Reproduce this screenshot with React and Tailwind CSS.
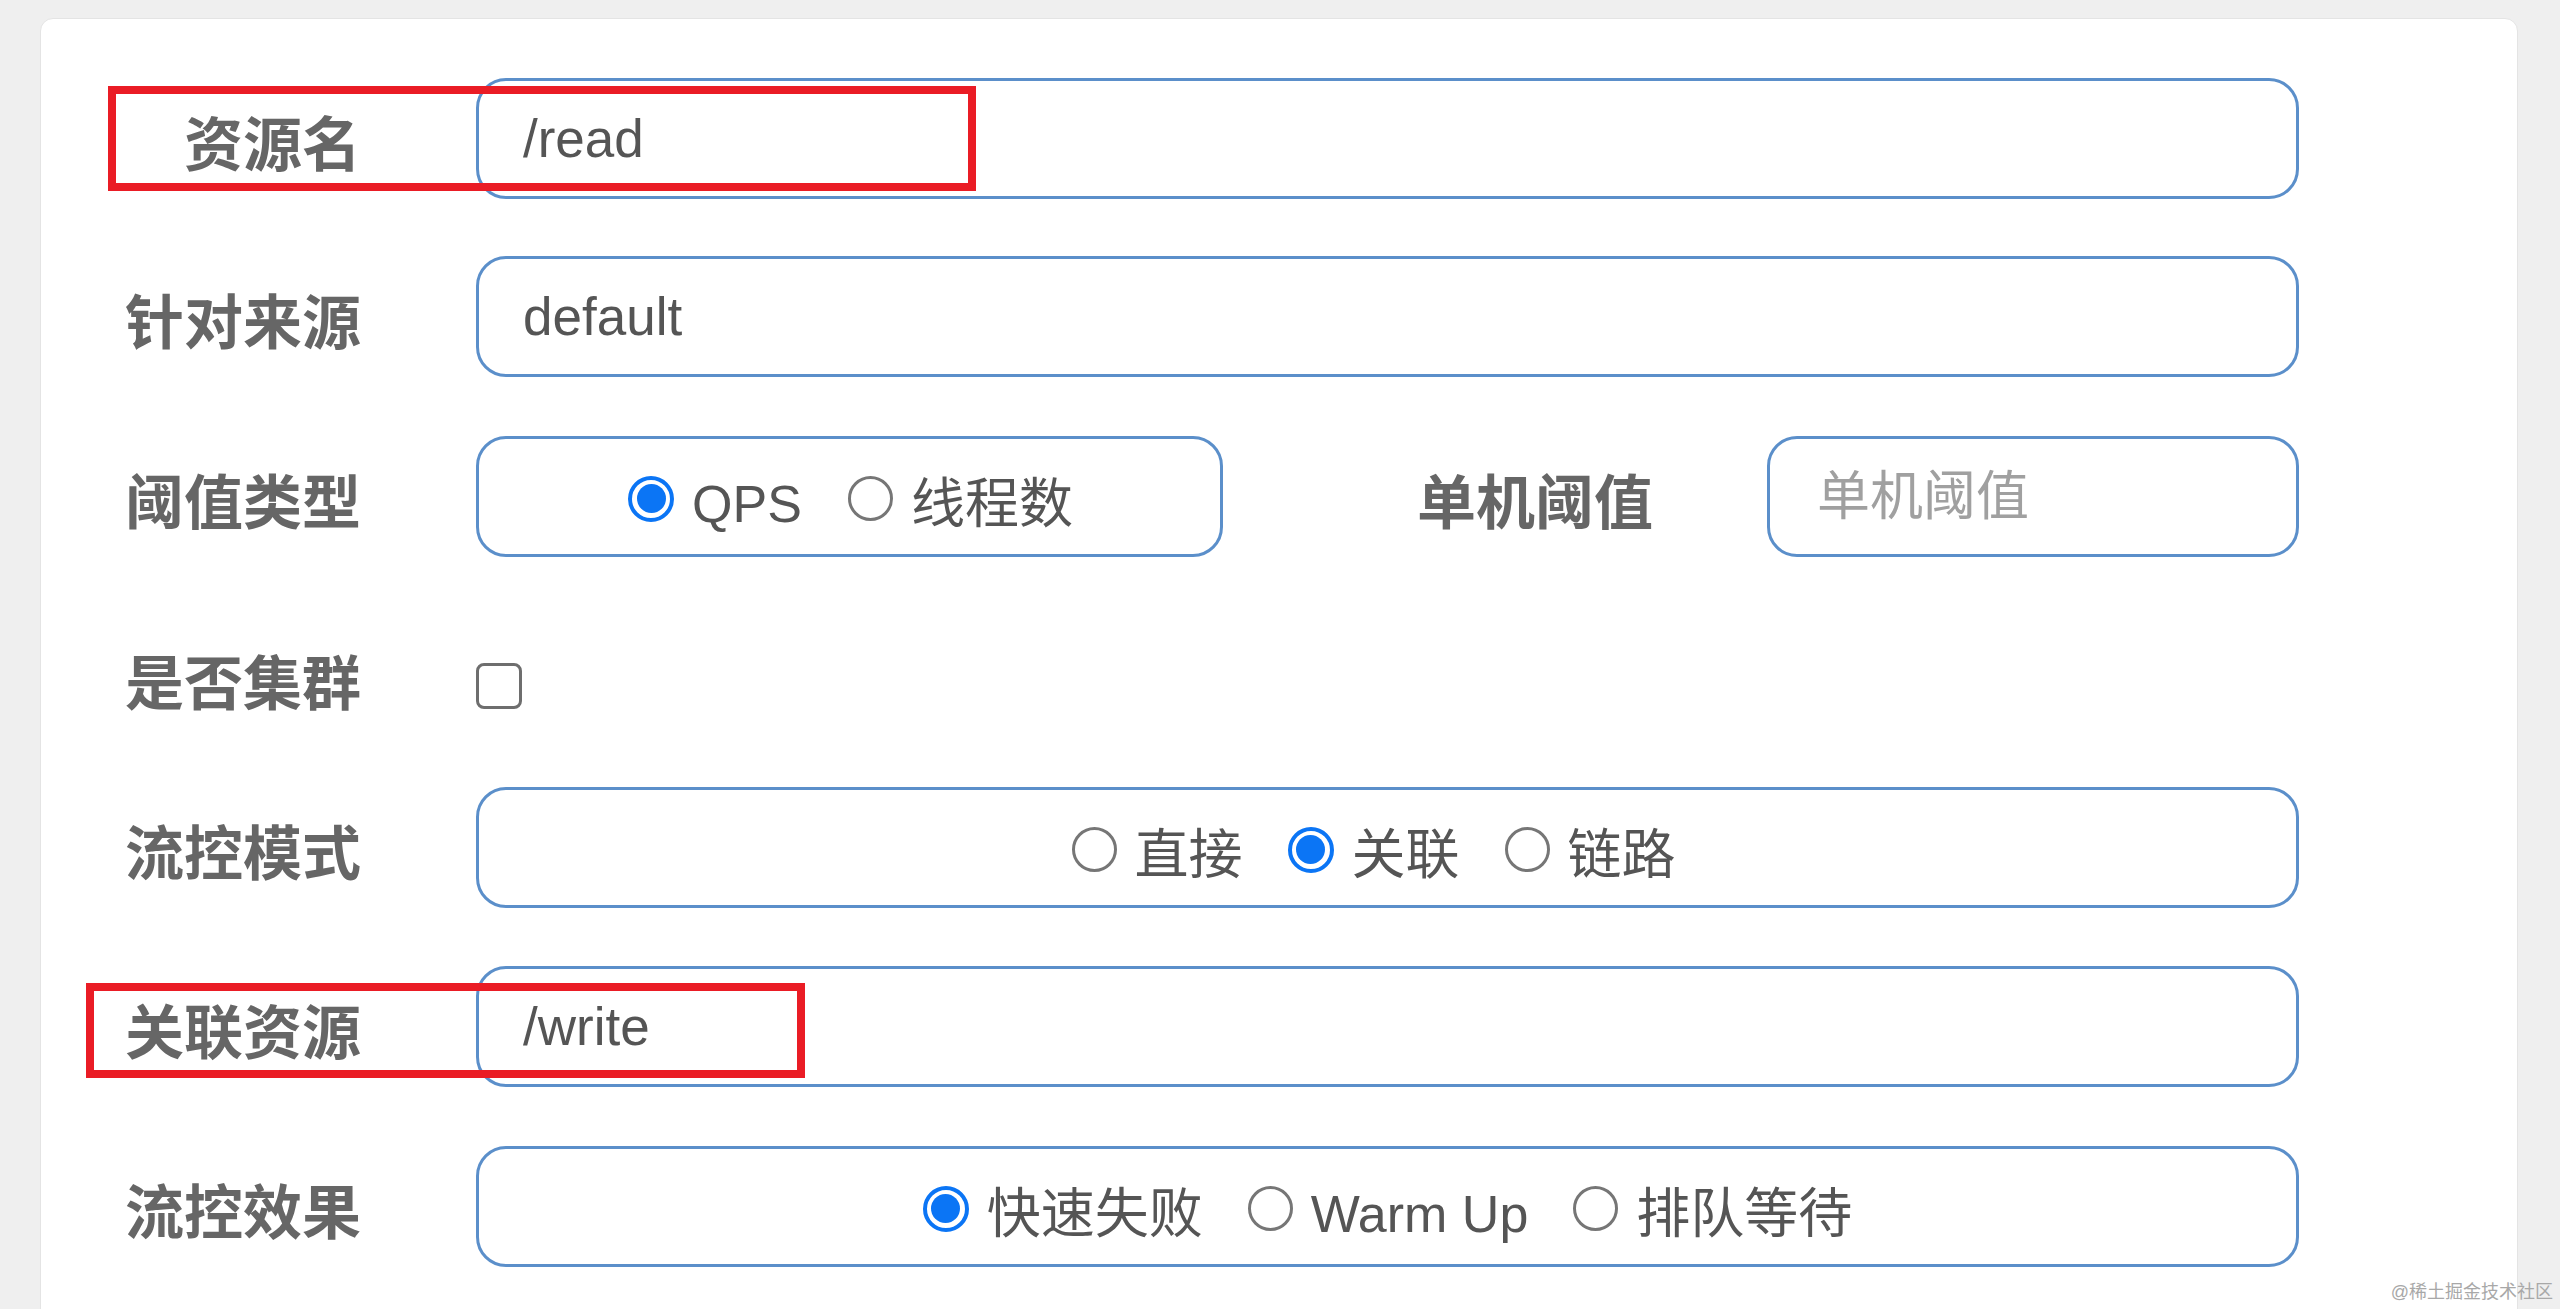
import React from "react";

function Radio({ checked }) {
  if (checked) {
    return (
      <span className="flex-none w-[46px] h-[46px] rounded-full border-[4px] border-[#0b75f5] bg-white flex items-center justify-center mb-[10px]">
        <span className="w-[29px] h-[29px] rounded-full bg-[#0b75f5]" />
      </span>
    );
  }
  return (
    <span className="flex-none w-[45px] h-[45px] rounded-full border-[3px] border-[#767676] bg-white mb-[10px]" />
  );
}

function RadioGroup({ items, gap = "gap-[45px]", extra = "" }) {
  return (
    <div className={`flex items-center justify-center pt-[14px] ${gap} ${extra}`}>
      {items.map((it) => (
        <div key={it.label} className="flex items-center gap-[18px]">
          <Radio checked={it.checked} />
          <span
            className={`${it.cjk ? "text-[54px]" : "text-[52px]"} leading-none text-[#555]`}
          >
            {it.label}
          </span>
        </div>
      ))}
    </div>
  );
}

function Label({ children, shift = true, width = "w-[320px]" }) {
  return (
    <div
      className={`flex-none ${width} text-right text-[59px] leading-none font-bold text-[#666] ${
        shift ? "pt-[16px]" : ""
      }`}
    >
      {children}
    </div>
  );
}

const boxCls =
  "h-[121px] border-[3px] border-[#5b8fca] rounded-[30px] bg-white flex items-center";

export default function App() {
  return (
    <div className="relative h-[1309px] overflow-hidden bg-[#efefef] font-['Liberation_Sans','Noto_Sans_CJK_SC',sans-serif]">
      <div className="pt-[18px] pl-[40px] pr-[42px]">
        <div className="h-[1400px] bg-white rounded-[13px] border border-[#e4e4e4] pr-[218px] pt-[59px] flex flex-col">
          {/* 资源名 */}
          <div className="flex items-center h-[121px]">
            <Label>资源名</Label>
            <div className={`ml-[115px] flex-1 ${boxCls} pl-[44px]`}>
              <span className="text-[53px] leading-none text-[#555]">/read</span>
            </div>
          </div>

          {/* 针对来源 */}
          <div className="flex items-center h-[121px] mt-[57px]">
            <Label>针对来源</Label>
            <div className={`ml-[115px] flex-1 ${boxCls} pl-[44px]`}>
              <span className="text-[53px] leading-none text-[#555]">default</span>
            </div>
          </div>

          {/* 阈值类型 / 单机阈值 */}
          <div className="flex items-center h-[121px] mt-[59px]">
            <Label>阈值类型</Label>
            <div className={`ml-[115px] w-[747px] flex-none ${boxCls} justify-center`}>
              <RadioGroup
                gap="gap-[46px]"
                extra="ml-[2px]"
                items={[
                  { label: "QPS", checked: true },
                  { label: "线程数", checked: false, cjk: true },
                ]}
              />
            </div>
            <Label width="w-[430px]">单机阈值</Label>
            <div className={`ml-[114px] flex-1 ${boxCls} pl-[47px]`}>
              <span className="text-[53px] leading-none text-[#a0a0a0]">单机阈值</span>
            </div>
          </div>

          {/* 是否集群 */}
          <div className="flex items-center h-[121px] mt-[68px]">
            <Label shift={false}>是否集群</Label>
            <div className="ml-[115px] w-[46px] h-[46px] border-[3px] border-[#6e6e6e] rounded-[8px] bg-white" />
          </div>

          {/* 流控模式 */}
          <div className="flex items-center h-[121px] mt-[41px]">
            <Label>流控模式</Label>
            <div className={`ml-[115px] flex-1 ${boxCls} justify-center`}>
              <RadioGroup
                extra="mr-[28px]"
                items={[
                  { label: "直接", checked: false, cjk: true },
                  { label: "关联", checked: true, cjk: true },
                  { label: "链路", checked: false, cjk: true },
                ]}
              />
            </div>
          </div>

          {/* 关联资源 */}
          <div className="flex items-center h-[121px] mt-[58px]">
            <Label>关联资源</Label>
            <div className={`ml-[115px] flex-1 ${boxCls} pl-[44px]`}>
              <span className="text-[53px] leading-none text-[#555]">/write</span>
            </div>
          </div>

          {/* 流控效果 */}
          <div className="flex items-center h-[121px] mt-[59px]">
            <Label>流控效果</Label>
            <div className={`ml-[115px] flex-1 ${boxCls} justify-center`}>
              <RadioGroup
                items={[
                  { label: "快速失败", checked: true, cjk: true },
                  { label: "Warm Up", checked: false },
                  { label: "排队等待", checked: false, cjk: true },
                ]}
              />
            </div>
          </div>
        </div>
      </div>

      {/* red annotation boxes */}
      <div className="absolute left-[108px] top-[86px] w-[868px] h-[105px] border-[8px] border-[#ea1c25] z-10" />
      <div className="absolute left-[86px] top-[983px] w-[719px] h-[95px] border-[8px] border-[#ea1c25] z-10" />

      {/* watermark */}
      <div className="absolute right-[7px] bottom-[8px] text-[18px] leading-none text-[#a8a8a8] z-10">
        @稀土掘金技术社区
      </div>
    </div>
  );
}
